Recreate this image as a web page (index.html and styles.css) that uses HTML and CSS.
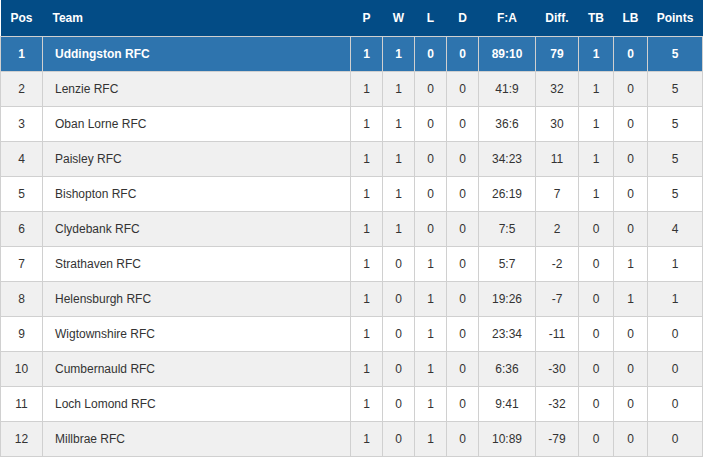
FILE: index.html
```html
<!DOCTYPE html>
<html>
<head>
<meta charset="utf-8">
<link rel="stylesheet" href="styles.css">
</head>
<body>
<table class="league">
  <colgroup>
    <col class="c-pos"><col class="c-team"><col class="c-n"><col class="c-n"><col class="c-n"><col class="c-n"><col class="c-fa"><col class="c-diff"><col class="c-tb"><col class="c-lb"><col class="c-pts">
  </colgroup>
  <thead>
    <tr><th>Pos</th><th class="team">Team</th><th>P</th><th>W</th><th>L</th><th>D</th><th>F:A</th><th>Diff.</th><th>TB</th><th>LB</th><th>Points</th></tr>
  </thead>
  <tbody>
    <tr class="hl"><td>1</td><td class="team">Uddingston RFC</td><td>1</td><td>1</td><td>0</td><td>0</td><td>89:10</td><td>79</td><td>1</td><td>0</td><td>5</td></tr>
    <tr><td>2</td><td class="team">Lenzie RFC</td><td>1</td><td>1</td><td>0</td><td>0</td><td>41:9</td><td>32</td><td>1</td><td>0</td><td>5</td></tr>
    <tr><td>3</td><td class="team">Oban Lorne RFC</td><td>1</td><td>1</td><td>0</td><td>0</td><td>36:6</td><td>30</td><td>1</td><td>0</td><td>5</td></tr>
    <tr><td>4</td><td class="team">Paisley RFC</td><td>1</td><td>1</td><td>0</td><td>0</td><td>34:23</td><td>11</td><td>1</td><td>0</td><td>5</td></tr>
    <tr><td>5</td><td class="team">Bishopton RFC</td><td>1</td><td>1</td><td>0</td><td>0</td><td>26:19</td><td>7</td><td>1</td><td>0</td><td>5</td></tr>
    <tr><td>6</td><td class="team">Clydebank RFC</td><td>1</td><td>1</td><td>0</td><td>0</td><td>7:5</td><td>2</td><td>0</td><td>0</td><td>4</td></tr>
    <tr><td>7</td><td class="team">Strathaven RFC</td><td>1</td><td>0</td><td>1</td><td>0</td><td>5:7</td><td>-2</td><td>0</td><td>1</td><td>1</td></tr>
    <tr><td>8</td><td class="team">Helensburgh RFC</td><td>1</td><td>0</td><td>1</td><td>0</td><td>19:26</td><td>-7</td><td>0</td><td>1</td><td>1</td></tr>
    <tr><td>9</td><td class="team">Wigtownshire RFC</td><td>1</td><td>0</td><td>1</td><td>0</td><td>23:34</td><td>-11</td><td>0</td><td>0</td><td>0</td></tr>
    <tr><td>10</td><td class="team">Cumbernauld RFC</td><td>1</td><td>0</td><td>1</td><td>0</td><td>6:36</td><td>-30</td><td>0</td><td>0</td><td>0</td></tr>
    <tr><td>11</td><td class="team">Loch Lomond RFC</td><td>1</td><td>0</td><td>1</td><td>0</td><td>9:41</td><td>-32</td><td>0</td><td>0</td><td>0</td></tr>
    <tr><td>12</td><td class="team">Millbrae RFC</td><td>1</td><td>0</td><td>1</td><td>0</td><td>10:89</td><td>-79</td><td>0</td><td>0</td><td>0</td></tr>
  </tbody>
</table>
</body>
</html>
```
FILE: styles.css
```css
html, body {
  margin: 0;
  padding: 0;
  background: #fff;
}
body {
  font-family: "Liberation Sans", Arial, sans-serif;
  font-size: 12px;
  color: #333;
}
.league {
  border-collapse: collapse;
  table-layout: fixed;
  width: 703px;
}
.c-pos { width: 42px; }
.c-team { width: 308px; }
.c-n { width: 32px; }
.c-fa { width: 57px; }
.c-diff { width: 43px; }
.c-tb { width: 35px; }
.c-lb { width: 34px; }
.c-pts { width: 55px; }

.league th {
  background: #034c86;
  color: #fff;
  font-weight: bold;
  height: 36px;
  padding: 0;
  text-align: center;
  border: none;
}
.league th.team {
  text-align: left;
  padding-left: 10px;
}
.league td {
  height: 34px;
  padding: 0;
  text-align: center;
  border: 1px solid #d0d0d0;
}
.league td.team {
  text-align: left;
  padding-left: 12px;
}
.league tbody tr:nth-child(even) td {
  background: #f0f0f0;
}
.league tbody tr:nth-child(odd) td {
  background: #fff;
}
.league tbody tr.hl td {
  background: #2e74ae;
  color: #fff;
  font-weight: bold;
}
```
